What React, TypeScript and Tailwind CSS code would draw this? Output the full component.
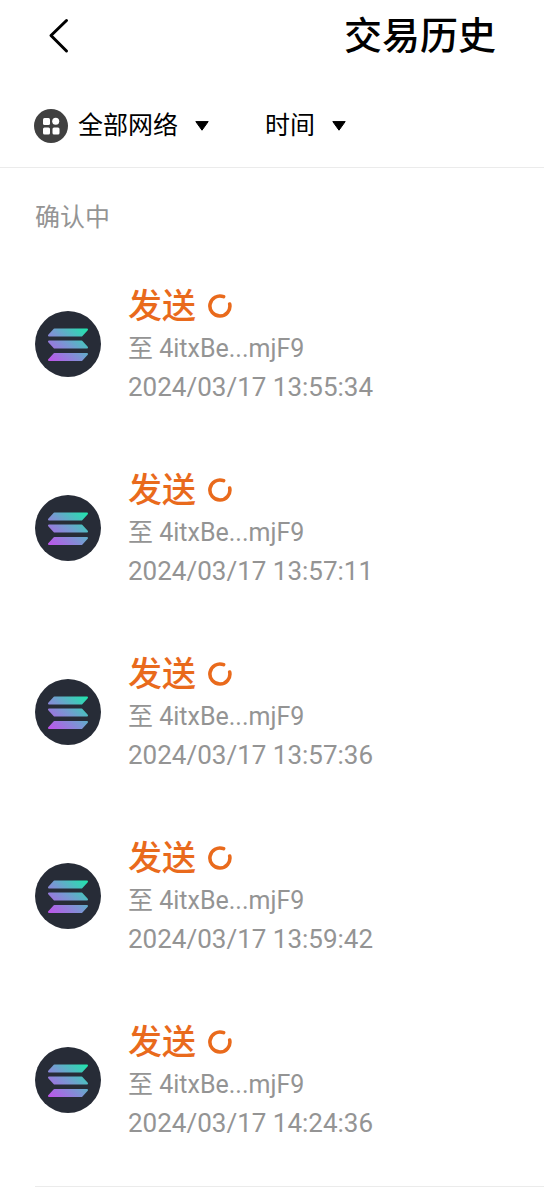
type Transaction = { to: string; time: string };

const transactions: Transaction[] = [
  { to: "4itxBe...mjF9", time: "2024/03/17 13:55:34" },
  { to: "4itxBe...mjF9", time: "2024/03/17 13:57:11" },
  { to: "4itxBe...mjF9", time: "2024/03/17 13:57:36" },
  { to: "4itxBe...mjF9", time: "2024/03/17 13:59:42" },
  { to: "4itxBe...mjF9", time: "2024/03/17 14:24:36" },
];

function SolanaIcon() {
  return (
    <svg viewBox="0 0 66 66" className="size-[66px] shrink-0" aria-hidden="true">
      <defs>
        <linearGradient id="solana" gradientUnits="userSpaceOnUse" x1="17" y1="52" x2="49" y2="16">
          <stop offset="0" stopColor="#bd55ea" />
          <stop offset="0.5" stopColor="#7799d2" />
          <stop offset="1" stopColor="#22e3ad" />
        </linearGradient>
      </defs>
      <circle cx="33" cy="33" r="33" fill="#272c37" />
      <g fill="url(#solana)" stroke="url(#solana)" strokeWidth="2" strokeLinejoin="round">
        <path d="M19.5 18.5H52L46.5 24.5H14Z" />
        <path d="M14 30.5H46.5L52 36.5H19.5Z" />
        <path d="M19.5 43H52L46.5 49H14Z" />
      </g>
    </svg>
  );
}

function NetworksIcon() {
  return (
    <svg viewBox="0 0 34 34" className="mr-2.5 size-[34px] shrink-0" aria-hidden="true">
      <circle cx="17" cy="17" r="17" fill="#404040" />
      <g fill="#fff">
        <rect x="9" y="9" width="7" height="7" rx="1.5" />
        <circle cx="21.7" cy="12.3" r="3.5" />
        <rect x="9" y="18.5" width="7" height="7" rx="1.5" />
        <rect x="18.5" y="18.5" width="7" height="7" rx="1.5" />
      </g>
    </svg>
  );
}

function Caret() {
  return (
    <svg viewBox="0 0 14 10" className="ml-4 h-[10px] w-[14px]" aria-hidden="true">
      <path d="M.8 .6H13.2L7 9.2Z" stroke="#000" strokeLinejoin="round" />
    </svg>
  );
}

function PendingIcon() {
  return (
    <svg viewBox="0 0 24 24" className="size-6" fill="none" aria-hidden="true">
      <path d="M15.6 2.7A10 10 0 1 0 21.7 10" stroke="#e96a1c" strokeWidth="3.6" strokeLinecap="round" />
    </svg>
  );
}

function Filter({ label, options }: { label: string; options: string[] }) {
  return (
    <label className="flex items-center">
      <select aria-label={label} className="appearance-none bg-transparent text-[25px] leading-[40px] text-black outline-none">
        {options.map((o) => (
          <option key={o}>{o}</option>
        ))}
      </select>
      <Caret />
    </label>
  );
}

export default function App() {
  return (
    <main className="min-h-screen bg-white font-[Roboto,'Noto_Sans_CJK_SC',sans-serif] text-black">
      <header className="flex h-[72px] items-center justify-between pr-12 pl-[47px]">
        <button type="button" aria-label="返回">
          <svg viewBox="0 0 24 36" className="h-9 w-6" fill="none" aria-hidden="true">
            <path d="M19.5 2.5L4 17.5L19.5 33" stroke="#000" strokeWidth="3" strokeLinecap="round" strokeLinejoin="round" />
          </svg>
        </button>
        <h1 className="text-[38px] leading-[48px] font-medium">交易历史</h1>
      </header>

      <div className="mt-3 flex h-[84px] items-center border-b border-[#ebebeb] px-[34px]">
        <NetworksIcon />
        <Filter label="网络" options={["全部网络", "Solana"]} />
        <div className="ml-14">
          <Filter label="时间" options={["时间"]} />
        </div>
      </div>

      <section className="pt-[30px] pl-[35px]">
        <h2 className="text-[25px] leading-[40px] text-[#949494]">确认中</h2>
        <ul className="mt-11 space-y-[60px] border-b border-[#ebebeb] pb-11">
          {transactions.map((t) => (
            <li key={t.time} className="flex items-center gap-[27px]">
              <SolanaIcon />
              <div className="text-[#949494]">
                <div className="flex items-center gap-3 text-[#e96a1c]">
                  <span className="text-[34px] leading-[48px] font-medium">发送</span>
                  <PendingIcon />
                </div>
                <p className="text-[25px] leading-[38px]">至 {t.to}</p>
                <p className="text-[26px] leading-[38px]">{t.time}</p>
              </div>
            </li>
          ))}
        </ul>
      </section>
    </main>
  );
}
